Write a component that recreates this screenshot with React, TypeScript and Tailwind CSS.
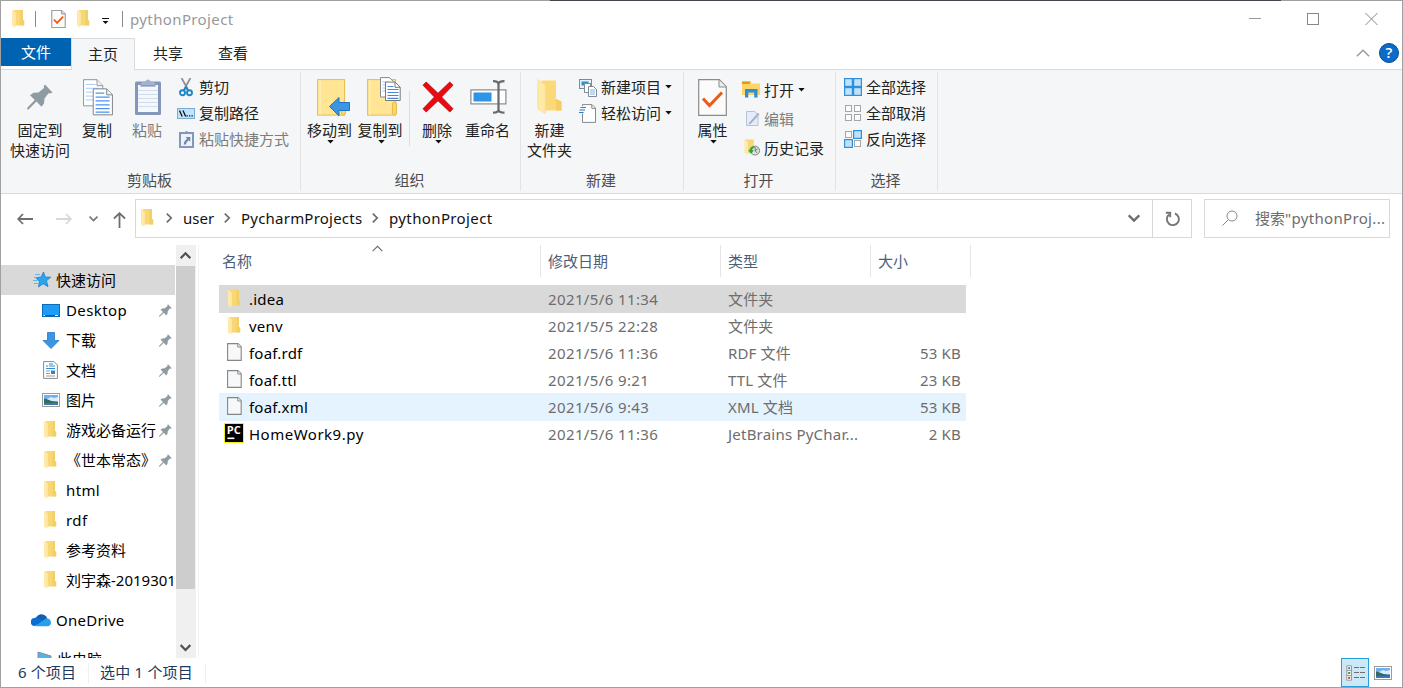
import type { ReactNode } from 'react';
import clsx from 'clsx';

type IconProps = { className?: string };

/* ---------- small icons ---------- */

const Folder = ({ className }: IconProps) => (
  <svg className={clsx('shrink-0', className)} width="13" height="18" viewBox="0 0 13 18">
    <path d="M2 0h9v10l1.200.8v4.700H2z" fill="#f8d775" />
    <path d="M8.500 0H11v10l1.200.8v4.700H8.500z" fill="#f0c95f" opacity=".6" />
    <path d="M0 .3h1.200l2.600 2.200v13.500L3 17.400 0 15.400z" fill="#ffe9a8" />
  </svg>
);

const FileIcon = () => (
  <svg className="mb-0.5 shrink-0" width="15" height="18" viewBox="0 0 15 18">
    <path d="M.6.6h10.400l3.200 3.200v13.600H.6z" fill="#f6f8f9" stroke="#868686" strokeWidth="1.100" />
    <path d="M10.800.8v3.200h3.200" fill="#fff" stroke="#868686" />
  </svg>
);

const PyCharm = () => (
  <svg className="mb-0.5 shrink-0" width="20" height="20" viewBox="0 0 20 20">
    <rect width="20" height="20" fill="#f3ee1c" />
    <rect x="1" y="1" width="18" height="18" fill="#000" />
    <text x="2.800" y="11" fontSize="10" fontWeight="700" fill="#fff" fontFamily="Open Sans, sans-serif" textLength="14" lengthAdjust="spacingAndGlyphs">PC</text>
    <rect x="3.400" y="14.500" width="7" height="1.600" fill="#fff" />
  </svg>
);

const Pin = ({ size = 13, className }: IconProps & { size?: number }) => (
  <svg className={clsx('shrink-0', className)} width={size} height={size} viewBox="0 0 26 26">
    <path
      d="M18 0.5L25.5 8.5L23 9.5L21.500 9.200L17.500 14.500L17 19.500L14.500 22.800L9.500 17.500L1.500 25.500L0 25.300L0.500 23.500L7.800 16L3 11.200L6.500 8.800L11.500 8.500L17 4L16.800 2Z"
      fill="#8e9ba3"
    />
  </svg>
);

const CheckDoc = ({ width, height }: { width: number; height: number }) => (
  <svg width={width} height={height} viewBox="0 0 29 37">
    <path d="M.7.7h20.600l7 7v28.600H.7z" fill="#fbfbfb" stroke="#8b8b8b" strokeWidth={width < 20 ? 2 : 1.2} />
    <path d="M21 1v7h7" fill="#eee" stroke="#8b8b8b" strokeWidth={width < 20 ? 2 : 1} />
    <path d="M5 19.500l6.500 7L24 13.500" fill="none" stroke="#ee5a13" strokeWidth={width < 20 ? 3.6 : 3} />
  </svg>
);

const Caret = ({ className }: IconProps) => (
  <svg className={className} width="7" height="4" viewBox="0 0 7 4">
    <path d="M.3 0h6.400L3.500 3.500z" fill="#111" />
  </svg>
);

const Chevron = ({ dir, size = 10, width = 1.5, color = '#6b6b6b' }: { dir: 'up' | 'down' | 'right'; size?: number; width?: number; color?: string }) => (
  <svg width={size} height={size} viewBox="0 0 10 10" className="shrink-0">
    <path
      d={dir === 'up' ? 'M.6 7.4L5 3l4.400 4.400' : dir === 'down' ? 'M.6 2.800L5 7.200l4.400-4.400' : 'M2.800.6L7.200 5 2.800 9.400'}
      fill="none"
      stroke={color}
      strokeWidth={width}
    />
  </svg>
);

const Picture = () => (
  <svg width="18" height="14" viewBox="0 0 18 14">
    <rect x=".5" y=".5" width="17" height="13" fill="#fff" stroke="#9b9b9b" />
    <rect x="2" y="2" width="14" height="10" fill="#6fb0ee" />
    <path d="M5 6l4-2 3 1 4-1v4H5z" fill="#d9ecfa" />
    <path d="M2 5.500c3 0 6 3 14 3.500v3H2z" fill="#356a63" />
    <path d="M2 10h14v2H2z" fill="#3d78ae" />
  </svg>
);

/* ---------- ribbon icons ---------- */

const CopyIcon = () => (
  <svg width="31" height="37" viewBox="0 0 32 38">
    <path d="M1.600.6h14l5.800 6v21H1.600z" fill="#fff" stroke="#8d9399" />
    <path d="M15.500.8v6h5.800" fill="#f1f1f1" stroke="#8d9399" />
    <path d="M4 5.500h10M4 9.500h14M4 13.500h14M4 17.500h14M4 21.500h14" stroke="#a9c8f5" />
    <path d="M11.600 10.100h14l5.800 6v20.800H11.600z" fill="#fff" stroke="#7b8084" />
    <path d="M25.500 10.300v6h5.800" fill="#f1f1f1" stroke="#7b8084" />
    <path d="M14 14.500h9M14 18.500h14.500M14 22.500h14.500M14 26.500h14.500M14 30.500h14.500M14 34h14.500" stroke="#4b92f3" strokeWidth="1.300" />
  </svg>
);

const Clipboard = () => (
  <svg className="ml-0.5" width="28" height="38" viewBox="0 0 28 38">
    <rect x="1" y="3.500" width="26" height="33.500" rx="1.500" fill="#8497bb" />
    <rect x="4" y="7" width="20" height="27" fill="#f4f8fd" />
    <path d="M4 12.500h20M4 16.500h20M4 20.500h20M4 24.500h20M4 28.500h20" stroke="#d3ddec" />
    <path d="M6.500 8l1-3.500 4-1.200a2.600 2.600 0 015 0l4 1.200 1 3.500z" fill="#a3b2ce" />
    <path d="M6.500 8h15" stroke="#6f84a9" />
  </svg>
);

const Scissors = () => (
  <svg width="14" height="19" viewBox="0 0 14 19">
    <path d="M2.600 0L8.700 11M11.400 0L5.300 11" stroke="#8a8f94" strokeWidth="1.700" />
    <circle cx="3.500" cy="14.800" r="2.500" fill="none" stroke="#1f86c8" strokeWidth="1.900" />
    <circle cx="10.500" cy="14.800" r="2.500" fill="none" stroke="#1f86c8" strokeWidth="1.900" />
    <path d="M4.700 12.500L7 9.500l2.300 3" fill="none" stroke="#1f86c8" strokeWidth="2" />
  </svg>
);

const PathIcon = () => (
  <svg width="18" height="11" viewBox="0 0 18 11">
    <rect x=".5" y=".5" width="17" height="10" fill="#bfe3fb" stroke="#79aed2" />
    <path d="M2.500 2.500l2.700 6M6 2.500l2.700 6" stroke="#111" strokeWidth="1.300" />
    <path d="M9.500 7.800h1.300M12 7.800h1.300M14.500 7.800h1.300" stroke="#111" strokeWidth="1.300" />
  </svg>
);

const PasteShortcut = () => (
  <svg width="15" height="18" viewBox="0 0 15 18">
    <rect x="1" y="3" width="13" height="14" fill="#eef3fa" stroke="#8497bb" strokeWidth="2" />
    <path d="M3.500 4l1-2h1.700a1.400 1.400 0 012.600 0h1.700l1 2z" fill="#8497bb" />
    <path d="M6.500 7h4.800v4.800L9.800 10.300C8 11.500 7.300 12.700 7 14.500H4.700c.1-2.500 1.300-4.300 3.500-5.800z" fill="#7086ae" />
  </svg>
);

const BigFolder = ({ children, w = 27 }: { children?: ReactNode; w?: number }) => (
  <svg className="ml-2" width="34" height="40" viewBox="0 0 34 40">
    <rect x=".6" y="2.600" width={w} height="35.500" fill="#ffe594" stroke="#e5bd4b" />
    <path d="M3 3v35" stroke="#fff2c4" />
    <rect x={w - 2.500} y="25" width="4" height="13" rx="2" fill="#fbd565" stroke="#e5bd4b" />
    {children}
  </svg>
);

const MoveTo = () => (
  <BigFolder>
    <path d="M12.500 29.500L22 20.500V25.500h10.500v8H22v5.500z" fill="#3a96e4" stroke="#1f74bd" />
  </BigFolder>
);

const CopyTo = () => (
  <BigFolder w={28}>
    <path d="M13.500.6h9l4 4V20h-13z" fill="#fff" stroke="#85898d" />
    <path d="M15.500 5h6M15.500 8h6M15.500 11h6M15.500 14h6" stroke="#9fc2f5" />
    <path d="M18.500 5.100h9.500l5.200 5V23.500H18.500z" fill="#fff" stroke="#76797d" />
    <path d="M28 5.300v5h5" fill="none" stroke="#76797d" />
    <path d="M20.500 9.500h6M20.500 12.500h11M20.500 15.500h11M20.500 18.500h11M20.500 21.300h11" stroke="#4b86dd" strokeWidth="1.200" />
  </BigFolder>
);

const DeleteIcon = () => (
  <svg className="ml-px" width="32" height="32" viewBox="0 0 32 32">
    <path d="M1 4.200L4.200 1 16 12.300 27.800 1 31 4.200 19.600 16 31 27.800 27.800 31 16 19.700 4.200 31 1 27.800 12.400 16z" fill="#e80a12" stroke="#b8060c" strokeWidth=".8" />
  </svg>
);

const RenameIcon = () => (
  <svg className="ml-px" width="37" height="34" viewBox="0 0 37 34">
    <rect x=".9" y="9.900" width="35" height="14" fill="#fff" stroke="#8a8a8a" strokeWidth="1.200" />
    <rect x="3.500" y="12.500" width="18" height="9" fill="#2f93e6" />
    <path d="M23 1.200c3 0 5.500.8 5.500 3.200v25c0 2.400-2.500 3.200-5.500 3.200M34.500 1.200c-3 0-6 .8-6 3.200v25c0 2.400 3 3.200 6 3.200" fill="none" stroke="#6a6a6a" strokeWidth="2.200" />
  </svg>
);

const NewFolder = () => (
  <svg width="26" height="36" viewBox="0 0 26 36">
    <path d="M4.500 1.500H19v18.500l5.500 2.500v9H4.500z" fill="#fbd977" />
    <path d="M19 20l5.500 2.500v9H19z" fill="#f5cd64" />
    <path d="M.8.6l7.500 5.500v28.500L.8 30z" fill="#ffe9a8" stroke="#f5d886" strokeWidth=".6" />
  </svg>
);

const NewItem = () => (
  <svg width="18" height="19" viewBox="0 0 18 19">
    <rect x=".5" y="1.500" width="12" height="9" fill="#e5f3fc" stroke="#7f8a92" />
    <rect x="2.500" y="3.500" width="7" height="4" fill="#2e8fc9" />
    <path d="M5.500 5.500h6v9h-6z" fill="#fff" stroke="#7f8a92" />
    <path d="M9.500 8.500h5l3 3v7h-8z" fill="#fff" stroke="#7f8a92" />
    <path d="M11 12h5M11 14h5M11 16h5" stroke="#7fb0e8" />
  </svg>
);

const EasyAccess = () => (
  <svg width="18" height="19" viewBox="0 0 18 19">
    <path d="M3.500.6h9.500l3.500 3.500V18.400H3.500z" fill="#fff" stroke="#85898d" />
    <path d="M12.800.8v3.600h3.600" fill="none" stroke="#85898d" />
    <rect x="0" y="2" width="5.500" height="7.500" fill="#f5f6f7" />
    <path d="M1.500 3.500h5.500M.5 6H6M0 8.500h4.500" stroke="#2a7fcb" strokeWidth="1.200" />
  </svg>
);

const OpenIcon = () => (
  <svg width="18" height="17" viewBox="0 0 18 17">
    <path d="M0 .5h8.500l1 2H18V14H0z" fill="#fdd567" />
    <path d="M0 .5h8.500l-1 2.500H0z" fill="#dc9a17" />
    <path d="M3 16.500V8h12.500v8.500h-3.300v-5H6.300v5z" fill="#2d8edb" />
  </svg>
);

const EditIcon = () => (
  <svg className="ml-1" width="17" height="19" viewBox="0 0 17 19">
    <path d="M.6 1h10l4 4v13H.6z" fill="#e6edf8" stroke="#a9b8d0" />
    <path d="M4 14.500L14.500 2.500l2 1.700L6 16l-3 .7z" fill="#a3b5d0" />
  </svg>
);

const HistoryIcon = () => (
  <svg className="ml-0.5" width="18" height="19" viewBox="0 0 18 19">
    <path d="M1.500.5h9.500v10.500H12V16H1.500z" fill="#f7d677" />
    <path d="M.5.5l4 2.500v15l-4-2.500z" fill="#ffe9a8" />
    <circle cx="12.500" cy="13" r="5" fill="#dfe2e3" stroke="#777" />
    <path d="M12.500 9v4l3-2M12.500 13l2 2.500" fill="none" stroke="#666" />
    <path d="M11.500 8C8 8 6.300 10 6.300 12.500H4.500l3.500 4 3.200-4H9.300c0-1.500.8-2.500 2.200-2.500z" fill="#36a52f" />
  </svg>
);

const SelectGrid = ({ on }: { on: boolean[] }) => (
  <svg width="18" height="18" viewBox="0 0 18 18">
    {on.map((active, i) => {
      const inset = active ? 0.6 : 1.5;
      const size = active ? 7.8 : 6;
      return (
        <rect
          key={i}
          x={(i % 2) * 9 + inset}
          y={Math.floor(i / 2) * 9 + inset}
          width={size}
          height={size}
          fill={active ? '#bfe2fb' : '#fbfbfb'}
          stroke={active ? '#2e8fdc' : '#a6a6a6'}
          strokeWidth={active ? 1.2 : 1}
        />
      );
    })}
  </svg>
);

/* ---------- sidebar icons ---------- */

const Star = () => (
  <svg width="18" height="16" viewBox="0 0 18 16">
    <path d="M10.500 0l1.700 5 5.600.2-4.300 3.600 1.500 5.900-4.900-3L5.500 15l1-5.600L2.500 5.500l5.500-.3z" fill="#2ba3ee" stroke="#1c7fc6" strokeWidth=".8" />
    <path d="M2 2.500h5M1 5.500h3M0 8.500h4.500M1 11.500h4" stroke="#5cb8ef" />
  </svg>
);

const DesktopIcon = () => (
  <svg width="18" height="13" viewBox="0 0 18 13">
    <rect x=".5" y=".5" width="17" height="12" fill="#1c9cf6" stroke="#0c6cb4" />
    <path d="M1 11.500h16" stroke="#0a5d9e" />
    <path d="M1.500 11.500h1.500M13 11.500h3" stroke="#fff" />
  </svg>
);

const DownloadIcon = () => (
  <svg width="18" height="17" viewBox="0 0 18 17">
    <path d="M5.500.5h7v8h4.500L9 16.500 1 8.500h4.500z" fill="#3b95e3" stroke="#2a79c2" strokeWidth=".8" />
  </svg>
);

const DocumentIcon = () => (
  <svg width="15" height="18" viewBox="0 0 15 18">
    <path d="M.6.6h10.400l3.400 3.400v13.400H.6z" fill="#fff" stroke="#8a8a8a" />
    <path d="M3 5h2M6 3h4M6 5h6M3 7.500h9" stroke="#2a8fd6" strokeWidth="1.200" />
    <path d="M3 10h4M3 12.500h4M3 15h9" stroke="#9b9b9b" />
    <rect x="8" y="9.500" width="4" height="3.500" fill="#3d82b6" />
  </svg>
);

const OneDrive = () => (
  <svg width="20" height="14" viewBox="0 0 20 14">
    <path d="M5 5a6 6 0 0110.500-1.200L17 8 6 12z" fill="#0f5fb3" />
    <path d="M4 13a4 4 0 01-.5-8C6 3.800 8.500 5 12 8z" fill="#0a6fd0" />
    <path d="M4 13.300L14 6c3.500-1.500 6 1 6 3.800 0 2-1.500 3.500-3.500 3.500z" fill="#27a0ea" />
  </svg>
);

const ComputerIcon = () => (
  <svg className="mb-0.5" width="18" height="15" viewBox="0 0 18 15">
    <path d="M1 1l13 4v9H1z" fill="#4eb4ee" stroke="#8a8f94" />
  </svg>
);

/* ---------- ribbon pieces ---------- */

type BigButtonProps = { icon: ReactNode; lines: string[]; className?: string; caret?: boolean; disabled?: boolean };

const BigButton = ({ icon, lines, className, caret, disabled }: BigButtonProps) => (
  <button className={clsx('flex shrink-0 flex-col items-center pt-1 whitespace-nowrap', className, disabled && 'text-[#7c7c7c]')}>
    <span className="flex h-[46px] items-center justify-center">{icon}</span>
    {lines.map((line) => (
      <span key={line} className="h-5 leading-5">{line}</span>
    ))}
    {caret && <Caret className="ml-0.5" />}
  </button>
);

type SmallButtonProps = { icon: ReactNode; label: string; caret?: boolean; disabled?: boolean; tall?: boolean };

const SmallButton = ({ icon, label, caret, disabled, tall }: SmallButtonProps) => (
  <button className={clsx('flex items-center whitespace-nowrap', tall ? 'h-[29px]' : 'h-[26px]', disabled && 'text-[#7c7c7c]')}>
    <span className="mr-1 flex w-[18px] justify-center">{icon}</span>
    {label}
    {caret && <Caret className="ml-1" />}
  </button>
);

const Group = ({ label, className, bodyClass, children }: { label: string; className: string; bodyClass: string; children: ReactNode }) => (
  <section className={clsx('flex shrink-0 flex-col', className)}>
    <div className={clsx('flex flex-1', bodyClass)}>{children}</div>
    <div className="mr-0.5 mb-px flex h-6 items-center justify-center text-[#4d4d4d]">{label}</div>
  </section>
);

const Divider = () => <div className="my-0.5 w-px shrink-0 bg-[#e1e3e5]" />;

const Ribbon = () => (
  <div className="flex h-[124px] shrink-0 border-b border-[#dadbdc] bg-[#f5f6f7] text-[#222]">
    <Group label="剪贴板" className="w-[299px]" bodyClass="pl-[7px]">
      <BigButton className="w-16" icon={<Pin size={26} />} lines={['固定到', '快速访问']} />
      <BigButton className="w-[50px]" icon={<CopyIcon />} lines={['复制']} />
      <BigButton className="w-[50px]" icon={<Clipboard />} lines={['粘贴']} disabled />
      <div className="pt-1 pl-[5px]">
        <SmallButton icon={<Scissors />} label="剪切" />
        <SmallButton icon={<PathIcon />} label="复制路径" />
        <SmallButton icon={<PasteShortcut />} label="粘贴快捷方式" disabled />
      </div>
    </Group>
    <Divider />
    <Group label="组织" className="w-[219px]" bodyClass="pl-[3px]">
      <BigButton className="w-[51px]" icon={<MoveTo />} lines={['移动到']} caret />
      <BigButton className="w-[50px]" icon={<CopyTo />} lines={['复制到']} caret />
      <div className="mt-[21px] mr-0.5 ml-1 h-[55px] w-px bg-[#dcdee0]" />
      <BigButton className="w-[50px]" icon={<DeleteIcon />} lines={['删除']} caret />
      <BigButton className="w-[51px]" icon={<RenameIcon />} lines={['重命名']} />
    </Group>
    <Divider />
    <Group label="新建" className="w-[162px]" bodyClass="pl-1">
      <BigButton className="w-[49px]" icon={<NewFolder />} lines={['新建', '文件夹']} />
      <div className="pt-1 pl-[5px]">
        <SmallButton icon={<NewItem />} label="新建项目" caret />
        <SmallButton icon={<EasyAccess />} label="轻松访问" caret />
      </div>
    </Group>
    <Divider />
    <Group label="打开" className="w-[151px]" bodyClass="pl-[5px]">
      <BigButton className="w-[47px]" icon={<CheckDoc width={29} height={37} />} lines={['属性']} caret />
      <div className="pt-[5px] pl-1.5">
        <SmallButton icon={<OpenIcon />} label="打开" caret tall />
        <SmallButton icon={<EditIcon />} label="编辑" disabled tall />
        <SmallButton icon={<HistoryIcon />} label="历史记录" tall />
      </div>
    </Group>
    <Divider />
    <Group label="选择" className="w-[101px]" bodyClass="pl-2">
      <div className="pt-1">
        <SmallButton icon={<SelectGrid on={[true, true, true, true]} />} label="全部选择" />
        <SmallButton icon={<SelectGrid on={[false, false, false, false]} />} label="全部取消" />
        <SmallButton icon={<SelectGrid on={[false, true, true, false]} />} label="反向选择" />
      </div>
    </Group>
    <Divider />
  </div>
);

/* ---------- data ---------- */

const quickAccess = [
  { name: 'Desktop', icon: <DesktopIcon />, pinned: true },
  { name: '下载', icon: <DownloadIcon />, pinned: true },
  { name: '文档', icon: <DocumentIcon />, pinned: true },
  { name: '图片', icon: <Picture />, pinned: true },
  { name: '游戏必备运行', icon: <Folder />, pinned: true },
  { name: '《世本常态》', icon: <Folder />, pinned: true },
  { name: 'html', icon: <Folder /> },
  { name: 'rdf', icon: <Folder /> },
  { name: '参考资料', icon: <Folder /> },
  { name: '刘宇森-2019301', icon: <Folder /> },
];

const files = [
  { name: '.idea', date: '2021/5/6 11:34', type: '文件夹', size: '', icon: <Folder />, state: 'selected' },
  { name: 'venv', date: '2021/5/5 22:28', type: '文件夹', size: '', icon: <Folder /> },
  { name: 'foaf.rdf', date: '2021/5/6 11:36', type: 'RDF 文件', size: '53 KB', icon: <FileIcon /> },
  { name: 'foaf.ttl', date: '2021/5/6 9:21', type: 'TTL 文件', size: '23 KB', icon: <FileIcon /> },
  { name: 'foaf.xml', date: '2021/5/6 9:43', type: 'XML 文档', size: '53 KB', icon: <FileIcon />, state: 'hover' },
  { name: 'HomeWork9.py', date: '2021/5/6 11:36', type: 'JetBrains PyChar...', size: '2 KB', icon: <PyCharm /> },
];

// CJK names keep their natural advance, latin ones run slightly wider
const isLatin = (text: string) => /^[\x20-\x7e]+$/.test(text);

/* ---------- page sections ---------- */

const TitleBar = () => (
  <header className="flex h-9 shrink-0 items-center pl-[11px] text-[#999]">
    <Folder />
    <div className="ml-2.5 h-4 w-px bg-[#8a8a8a]" />
    <div className="ml-[15px]"><CheckDoc width={15} height={18} /></div>
    <Folder className="ml-[11px]" />
    <svg className="mt-1 ml-3" width="7" height="6" viewBox="0 0 7 6">
      <path d="M0 .5h7" stroke="#111" />
      <path d="M.5 3h6l-3 3z" fill="#111" />
    </svg>
    <div className="ml-[13px] h-4 w-px bg-[#8a8a8a]" />
    <span className="ml-[7px] tracking-[0.38px]">pythonProject</span>
    <div className="mr-6 ml-auto flex items-center gap-[46px]">
      <svg width="12" height="12" viewBox="0 0 12 12"><path d="M0 5.500h12" stroke="#999" /></svg>
      <svg width="12" height="12" viewBox="0 0 12 12"><rect x=".5" y=".5" width="11" height="11" fill="none" stroke="#888" /></svg>
      <svg width="13" height="12" viewBox="0 0 13 12"><path d="M.5 0l12 12M12.500 0l-12 12" stroke="#888" /></svg>
    </div>
  </header>
);

const Tabs = () => (
  <nav className="mt-px flex h-8 shrink-0 text-[#222]">
    <div className="w-[70px] border-b border-[#dadbdc]">
      <div className="flex h-7 items-center justify-center bg-[#0063b1] text-white">文件</div>
    </div>
    <div className="flex w-16 items-center justify-center border-x border-t border-[#dadbdc] bg-[#f5f6f7] pb-0.5">主页</div>
    <div className="flex flex-1 items-center border-b border-[#dadbdc] pb-px">
      <span className="ml-[18px]">共享</span>
      <span className="ml-[35px]">查看</span>
      <div className="mr-[3px] ml-auto flex items-center gap-[9px]">
        <Chevron dir="up" size={14} width={1} color="#999" />
        <svg width="20" height="20" viewBox="0 0 20 20">
          <circle cx="10" cy="10" r="9.500" fill="#0a6bcb" stroke="#084a8c" />
          <text x="10" y="15.200" textAnchor="middle" fontSize="15" fontWeight="600" fill="#fff" fontFamily="Open Sans, sans-serif">?</text>
        </svg>
      </div>
    </div>
  </nav>
);

const AddressBar = () => (
  <div className="flex h-[51px] shrink-0 items-start pt-[5px]">
    <div className="flex h-[39px] w-[134px] shrink-0 items-center pl-4">
      <svg width="16" height="12" viewBox="0 0 16 12"><path d="M6 1L1.200 6 6 11M1.200 6H16" fill="none" stroke="#6e6e6e" strokeWidth="1.800" /></svg>
      <svg className="ml-[23px]" width="16" height="12" viewBox="0 0 16 12"><path d="M10 1l4.800 5L10 11M14.800 6H0" fill="none" stroke="#d8d8d8" strokeWidth="1.800" /></svg>
      <div className="ml-[17px]"><Chevron dir="down" size={9} color="#777" width={1.900} /></div>
      <svg className="mt-0.5 ml-[15px]" width="13" height="16" viewBox="0 0 13 16"><path d="M1 6.500l5.500-5.300L12 6.500M6.500 1.200V16" fill="none" stroke="#6e6e6e" strokeWidth="1.800" /></svg>
    </div>
    <div className="flex h-[39px] flex-1 items-center border border-[#d9d9d9] pb-0.5 text-[#111]">
      <Folder className="ml-[5px]" />
      <div className="ml-2.5"><Chevron dir="right" width={1.700} /></div>
      <span className="ml-[9px] w-[32px]">user</span>
      <div className="ml-[7px]"><Chevron dir="right" width={1.700} /></div>
      <span className="ml-[9px] w-[122px] tracking-[0.22px]">PycharmProjects</span>
      <div className="ml-[7px]"><Chevron dir="right" width={1.700} /></div>
      <span className="ml-[9px] tracking-[0.38px]">pythonProject</span>
      <div className="mr-3 ml-auto"><Chevron dir="down" size={12} width={1.900} /></div>
      <div className="-mb-0.5 flex h-[37px] w-[39px] items-center justify-center border-l border-[#d9d9d9]">
        <svg className="ml-px" width="15" height="16" viewBox="0 0 15 16">
          <path d="M10 2.500A6 6 0 11 4 3.500M.8 1.800h4.400v4.400" fill="none" stroke="#757575" strokeWidth="1.900" />
        </svg>
      </div>
    </div>
    <div className="mr-3 ml-3 flex h-[39px] w-[186px] shrink-0 items-center border border-[#d9d9d9] pb-0.5 pl-[17px] text-[#6d6d6d]">
      <svg width="16" height="16" viewBox="0 0 16 16">
        <circle cx="10" cy="6" r="5" fill="none" stroke="#888" />
        <path d="M6.300 9.700L.5 15.500" stroke="#888" />
      </svg>
      <span className="ml-[17px] whitespace-nowrap">搜索<span className="tracking-[0.33px]">"pythonProj...</span></span>
    </div>
  </div>
);

const Sidebar = () => (
  <aside className="flex h-full w-[198px] shrink-0">
    <div className="mr-px w-[174px] overflow-hidden pt-5 whitespace-nowrap text-black">
      <div className="flex h-[30px] items-center bg-[#d9d9d9] pl-8">
        <Star />
        <span className="ml-[5px]">快速访问</span>
      </div>
      {quickAccess.map((item) => (
        <div key={item.name} className="flex h-[30px] items-center pl-10">
          <span className="flex w-[19px] shrink-0 justify-center">{item.icon}</span>
          <span className={clsx('ml-1.5', item.pinned && 'w-[93px] shrink-0', isLatin(item.name) && 'tracking-[0.38px]')}>{item.name}</span>
          {item.pinned && <Pin size={13} />}
        </div>
      ))}
      <div className="mt-2.5 flex h-[30px] items-center pl-[30px]">
        <OneDrive />
        <span className="ml-[5px] tracking-[0.25px]">OneDrive</span>
      </div>
      <div className="mt-2.5 flex h-7 items-center pl-9">
        <ComputerIcon />
        <span className="ml-0.5">此电脑</span>
      </div>
    </div>
    <div className="flex w-5 shrink-0 flex-col bg-[#f0f0f0]">
      <div className="flex h-[21px] items-center pl-1"><Chevron dir="up" size={11} width={2} color="#505050" /></div>
      <div className="h-[323px] w-[19px] bg-[#cdcdcd]" />
      <div className="mt-auto flex h-[21px] items-center pl-1"><Chevron dir="down" size={11} width={2} color="#505050" /></div>
    </div>
    <div className="ml-auto w-px bg-[#f2f2f2]" />
  </aside>
);

const FileList = () => (
  <main className="flex flex-1 flex-col pl-5">
    <div className="flex h-8 w-[752px] text-[#4c607a]">
      <div className="relative flex w-[322px] items-center border-r border-[#e5e5e5] pl-[3px]">
        名称
        <div className="absolute -top-0.5 left-[153px]"><Chevron dir="up" size={11} width={1} /></div>
      </div>
      <div className="flex w-[180px] items-center border-r border-[#e5e5e5] pl-[7px]">修改日期</div>
      <div className="flex w-[150px] items-center border-r border-[#e5e5e5] pl-[7px]">类型</div>
      <div className="flex w-[100px] items-center border-r border-[#e5e5e5] pl-[7px]">大小</div>
    </div>
    <div className="mt-2 w-[747px] text-[#6d6d6d]">
      {files.map((file) => (
        <div
          key={file.name}
          className={clsx(
            '-mb-px flex h-7 items-center whitespace-nowrap',
            file.state === 'selected' && 'bg-[#d9d9d9]',
            file.state === 'hover' && 'bg-[#e5f3ff]'
          )}
        >
          <span className="ml-[5px] flex w-5 shrink-0 justify-center">{file.icon}</span>
          <span className={clsx('ml-[5px] w-[299px] text-black', file.name === 'HomeWork9.py' ? 'tracking-[0.5px]' : 'tracking-[0.2px]')}>{file.name}</span>
          <span className="w-[180px] tracking-[0.38px]">{file.date}</span>
          <span className={clsx('w-[150px]', isLatin(file.type) ? 'tracking-[0.22px]' : 'tracking-[0.15px]')}>{file.type}</span>
          <span className="mr-[5px] ml-auto tracking-[0.2px]">{file.size}</span>
        </div>
      ))}
    </div>
  </main>
);

const StatusBar = () => (
  <footer className="flex h-[29px] shrink-0 items-center pl-[17px] text-[#1e395b]">
    <span className="w-[70px] pb-0.5 tracking-[0.1px]">6 个项目</span>
    <div className="h-5 w-px bg-[#efefef]" />
    <span className="ml-[11px] w-[105px] pb-0.5 tracking-[0.2px]">选中 1 个项目</span>
    <div className="h-5 w-px bg-[#efefef]" />
    <div className="mr-2.5 ml-auto flex h-full items-center gap-[5px]">
      <div className="flex h-[29px] w-7 items-center justify-center border border-[#26a0da] bg-[#cce8f6]">
        <svg className="ml-0.5" width="20" height="16" viewBox="0 0 20 16">
          <path d="M.8.8h4.700v14.400H.8zM.8 5.600h4.700M.8 10.400h4.700" fill="#fff" stroke="#979797" />
          <path d="M2.200 3.200h2" stroke="#3c7fa0" strokeWidth="2" />
          <path d="M2.200 8h2" stroke="#4d8a2f" strokeWidth="2" />
          <path d="M2.200 12.800h2" stroke="#c2382a" strokeWidth="2" />
          <path d="M8 2.500h5M14 2.500h5M8 7.500h5M14 7.500h5M8 12.500h5M14 12.500h5" stroke="#6e6e6e" />
        </svg>
      </div>
      <Picture />
    </div>
  </footer>
);

export default function App() {
  return (
    <div className="flex h-[688px] w-[1403px] flex-col overflow-hidden border border-t-0 border-[#a0a0a0] bg-white font-['Noto_Sans','Noto_Sans_CJK_SC',sans-serif] text-[15px] leading-5">
      {/* window edge, darker where the desktop behind shows through */}
      <div className="flex h-px shrink-0 bg-[#a0a0a0]">
        <div className="ml-[549px] w-[731px] bg-[#45424b]" />
      </div>
      <TitleBar />
      <Tabs />
      <Ribbon />
      <AddressBar />
      <div className="flex h-[413px] shrink-0">
        <Sidebar />
        <FileList />
      </div>
      <StatusBar />
    </div>
  );
}
